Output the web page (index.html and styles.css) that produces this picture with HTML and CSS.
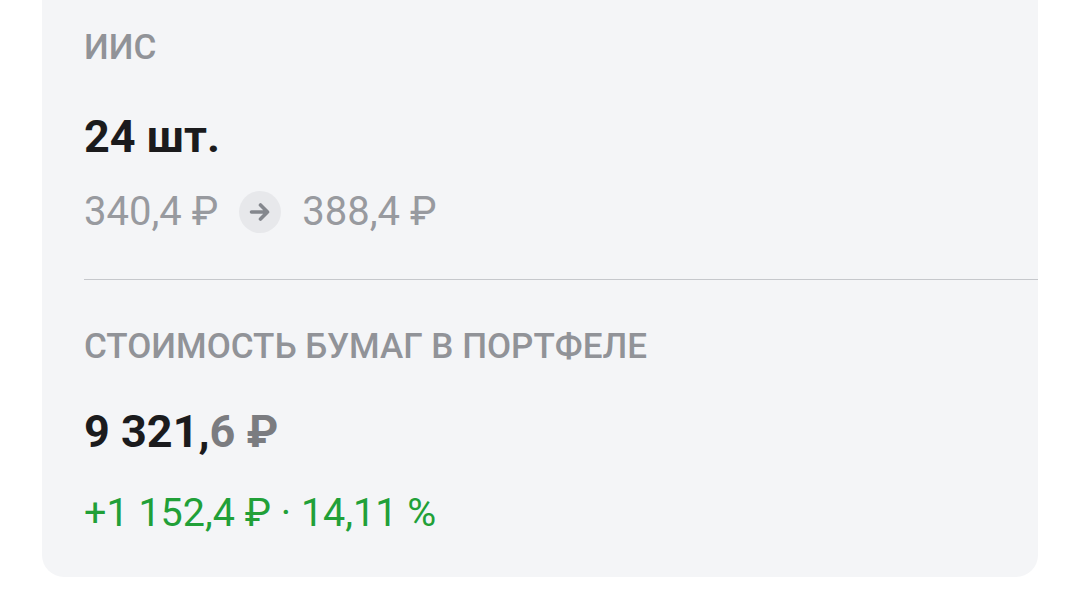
FILE: index.html
```html
<!DOCTYPE html>
<html>
    <head>
        <meta charset="utf-8"/>
        <link rel="stylesheet" href="styles.css">
    </head>
    <body>
        <!-- portfolio card, top part is cut off by the screen -->
        <div class="card">
            <div class="block">
                <div class="label">ИИС</div>
                <div class="value">24 шт.</div>
                <div class="prices">
                    <span class="price">340,4 ₽</span>
                    <span class="arrow">
                        <svg width="24" height="24" viewBox="0 0 24 24">
                            <path d="M3.5 12h16M12.5 5L19.5 12l-7 7" fill="none" stroke="#84878d" stroke-width="3.6" stroke-linecap="round" stroke-linejoin="round"/>
                        </svg>
                    </span>
                    <span class="price">388,4 ₽</span>
                </div>
            </div>

            <div class="divider"></div>

            <div class="block second">
                <div class="label">СТОИМОСТЬ БУМАГ В ПОРТФЕЛЕ</div>
                <div class="value sum">9 321,<span class="cents">6 ₽</span></div>
                <div class="profit">+1 152,4 ₽ · 14,11 %</div>
            </div>
        </div>
    </body>
</html>
```

FILE: styles.css
```css
/* page background */
body {
    margin: 0;
    background-color: #ffffff;
    font-family: "Roboto", "Noto Sans", sans-serif;
}

/* grey card, starts above the visible area */
.card {
    margin-left: 42px;
    width: 996px;
    padding-top: 27px;
    padding-bottom: 40px;
    background-color: #f4f5f7;
    border-radius: 0 0 22px 22px;
}

.block {
    padding-left: 42px;
}

.second {
    padding-top: 46px;
}

.label {
    font-size: 35px;
    line-height: 42px;
    font-weight: 500;
    color: #919398;
}

.value {
    margin-top: 42px;
    font-size: 45px;
    line-height: 52px;
    font-weight: 700;
    color: #1b1b1d;
}

.sum {
    margin-top: 38px;
}

.cents {
    color: #7b7c80;
}

.prices {
    margin-top: 25px;
    display: flex;
    align-items: center;
    height: 48px;
    gap: 21px;
}

.price {
    font-size: 40px;
    line-height: 48px;
    color: #989a9f;
}

.arrow {
    width: 42px;
    height: 42px;
    border-radius: 50%;
    background-color: #e7e8eb;
    display: flex;
    align-items: center;
    justify-content: center;
}

.divider {
    margin-top: 43px;
    margin-left: 42px;
    height: 1px;
    background-color: #c6c8cc;
}

.profit {
    margin-top: 31px;
    font-size: 39.5px;
    line-height: 48px;
    color: #21a038;
}
```
